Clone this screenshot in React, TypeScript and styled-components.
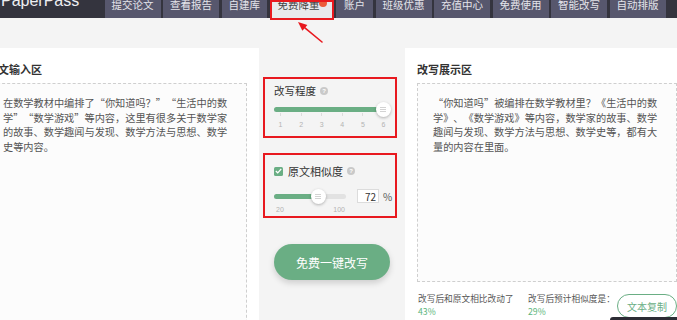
import styled, { createGlobalStyle } from "styled-components";

const GlobalStyle = createGlobalStyle`
  html, body {
    margin: 0;
    padding: 0;
  }
  body {
    width: 677px;
    height: 320px;
    overflow: hidden;
    background: #f4f4f4;
    font-family: "Noto Sans CJK SC", "Noto Sans", sans-serif;
    color: #555;
  }
`;

const GREEN = "#6aae84";
const RED = "#e8191f";

const Page = styled.div`
  position: relative;
  width: 677px;
  height: 320px;
  overflow: hidden;
`;

const NavBar = styled.nav`
  display: flex;
  height: 18px;
  gap: 2.5px;
  background: #34343e;
`;

const Logo = styled.div`
  flex: none;
  width: 102px;
  box-sizing: border-box;
  padding-left: 1px;
  margin-top: -7.5px;
  font-family: "Liberation Sans", Arial, sans-serif;
  font-size: 16px;
  line-height: 16px;
  color: #eeeef2;
`;

const Tab = styled.div<{ $px?: number }>`
  position: relative;
  flex: none;
  height: 18px;
  padding: 0 ${(p) => p.$px ?? 7}px;
  background: #57576d;
  color: #e4e4ea;
  font-size: 10.5px;
  line-height: 10px;
  white-space: nowrap;
`;

const ActiveTab = styled(Tab)`
  padding: 0 14px 0 8px;
  background: #e9e9ec;
  color: #444;

  &::after {
    content: "";
    position: absolute;
    left: 0;
    right: 0;
    top: 0;
    height: 20px;
    box-sizing: border-box;
    border: 2px solid ${RED};
  }
`;

const Dot = styled.span`
  position: absolute;
  left: 49px;
  top: -1px;
  width: 8px;
  height: 8px;
  border-radius: 50%;
  background: #ec5a3a;
`;

const Arrow = styled.svg`
  position: absolute;
  left: 290px;
  top: 16px;
`;

const Main = styled.main`
  display: flex;
  align-items: flex-start;
  margin: 30px 0 0 -25px;
`;

const Panel = styled.section`
  flex: none;
  width: 284px;
  height: 272px;
  box-sizing: border-box;
  padding: 14px 12px 0;
  background: #fff;
`;

const PanelTitle = styled.h3`
  margin: 0 0 7px;
  font-size: 11px;
  line-height: 14px;
  font-weight: bold;
  color: #333;
`;

const TextBox = styled.div<{ $h: number }>`
  height: ${(p) => p.$h}px;
  box-sizing: border-box;
  padding: 12px 15px;
  border: 1px dashed #cfcfcf;
  background: #fcfcfc;
  font-size: 10.2px;
  line-height: 14.5px;
  color: #555;
  text-spacing-trim: space-all;
`;

/* full-width quote marks, as the Chinese UI font draws them */
const Q = styled.span`
  font-feature-settings: "fwid";
`;

const Controls = styled.div`
  flex: none;
  width: 146px;
  box-sizing: border-box;
  padding: 29px 8px 0 4px;
  display: flex;
  flex-direction: column;
`;

const ControlBox = styled.div<{ $h: number; $pt: number; $mt?: number }>`
  width: 134px;
  height: ${(p) => p.$h}px;
  box-sizing: border-box;
  margin-top: ${(p) => p.$mt ?? 0}px;
  padding: ${(p) => p.$pt}px 9px 0;
  border: 2px solid ${RED};
`;

const LabelRow = styled.div<{ $size: number }>`
  display: flex;
  align-items: center;
  gap: 4px;
  height: 14px;
  font-size: ${(p) => p.$size}px;
  line-height: 14px;
  color: #333;
`;

const Help = styled.span`
  display: inline-flex;
  align-items: center;
  justify-content: center;
  width: 8px;
  height: 8px;
  border-radius: 50%;
  background: #c9c9c9;
  color: #fff;
  font-family: "Liberation Sans", Arial, sans-serif;
  font-size: 6px;
  font-weight: bold;
  line-height: 8px;
`;

const Check = styled.span`
  display: inline-flex;
  align-items: center;
  justify-content: center;
  width: 9px;
  height: 9px;
  border-radius: 1.5px;
  background: ${GREEN};
  margin-right: 1px;
`;

const Slider = styled.div<{ $w: number; $h: number; $mt?: number }>`
  position: relative;
  flex: none;
  width: ${(p) => p.$w}px;
  height: ${(p) => p.$h}px;
  margin-top: ${(p) => p.$mt ?? 0}px;
`;

const Rail = styled.div`
  position: absolute;
  left: 0;
  right: 0;
  top: 50%;
  height: 5px;
  margin-top: -2.5px;
  border-radius: 3px;
  background: #e2e2e2;
  overflow: hidden;
`;

const Fill = styled.div`
  height: 100%;
  background: ${GREEN};
`;

const Thumb = styled.div`
  position: absolute;
  top: 50%;
  width: 15px;
  height: 15px;
  margin: -7.5px 0 0 -7.5px;
  border-radius: 50%;
  background: #fff;
  box-shadow: 0 1px 3px rgba(0, 0, 0, 0.28);
  display: flex;
  align-items: center;
  justify-content: center;
`;

const Scale = styled.div<{ $w: number; $ml: number }>`
  display: flex;
  justify-content: space-between;
  width: ${(p) => p.$w}px;
  margin-left: ${(p) => p.$ml}px;
`;

const ScaleItem = styled.div`
  width: 5px;
  display: flex;
  flex-direction: column;
  align-items: center;
`;

const Mark = styled.span`
  width: 1px;
  height: 3px;
  background: #dcdcdc;
`;

const ScaleText = styled.span<{ $mt?: number }>`
  margin-top: ${(p) => p.$mt ?? 0}px;
  font-family: "Liberation Sans", Arial, sans-serif;
  font-size: 7px;
  line-height: 8px;
  color: #b3b3b3;
  white-space: nowrap;
`;

const SliderRow = styled.div`
  display: flex;
  align-items: center;
  height: 20px;
  margin-top: 8px;
`;

const ValueInput = styled.input`
  width: 22px;
  height: 14px;
  box-sizing: border-box;
  margin: 0 0 0 11px;
  padding: 0 2px 0 0;
  border: 1px solid #dcdcdc;
  background: #fff;
  text-align: right;
  font-family: "Noto Sans CJK SC", sans-serif;
  font-size: 10px;
  color: #333;
  outline: none;
`;

const Unit = styled.span`
  margin-left: 4px;
  font-size: 10px;
  color: #555;
`;

const RewriteButton = styled.button`
  width: 116px;
  height: 36px;
  margin: 26px 0 0 11px;
  border: none;
  border-radius: 18px;
  background: ${GREEN};
  box-shadow: 0 3px 6px rgba(0, 0, 0, 0.16);
  color: #fff;
  font-family: "Noto Sans CJK SC", sans-serif;
  font-size: 12px;
  cursor: pointer;
`;

const StatsRow = styled.div`
  display: flex;
  margin-top: 10px;
`;

const Stat = styled.div<{ $w: number }>`
  flex: none;
  width: ${(p) => p.$w}px;
  padding-left: 1px;
  box-sizing: border-box;
  font-size: 8.7px;
  line-height: 13px;
  color: #555;
  white-space: nowrap;
`;

const StatValue = styled.div`
  color: #5cb57c;
`;

const CopyButton = styled.button`
  flex: none;
  width: 60px;
  height: 24px;
  margin-top: 2px;
  padding: 0;
  border: 1px solid ${GREEN};
  border-radius: 12px;
  background: #fff;
  color: ${GREEN};
  font-family: "Noto Sans CJK SC", sans-serif;
  font-size: 10px;
`;

const CornerPopup = styled.div`
  position: absolute;
  left: 610px;
  top: 317px;
  width: 70px;
  height: 8px;
  border-radius: 3px 0 0 0;
  background: #2c2c34;
`;

const tabs = ["班级优惠", "充值中心", "免费使用", "智能改写", "自动排版"];

const Grip = () => (
  <svg width="6" height="5" viewBox="0 0 6 5">
    <path d="M0 0.5H6M0 2.5H6M0 4.5H6" stroke="#c8c8c8" strokeWidth="0.8" />
  </svg>
);

const RangeSlider = (props: { w: number; h: number; pos: number; mt?: number }) => (
  <Slider $w={props.w} $h={props.h} $mt={props.mt}>
    <Rail>
      <Fill style={{ width: `${props.pos}px` }} />
    </Rail>
    <Thumb style={{ left: `${props.pos}px` }}>
      <Grip />
    </Thumb>
  </Slider>
);

const App = () => {
  return (
    <Page>
      <GlobalStyle />
      <NavBar>
        <Logo>PaperPass</Logo>
        <Tab>提交论文</Tab>
        <Tab>查看报告</Tab>
        <Tab>自建库</Tab>
        <ActiveTab>
          免费降重
          <Dot />
        </ActiveTab>
        <Tab $px={8}>账户</Tab>
        {tabs.map((t) => (
          <Tab key={t}>{t}</Tab>
        ))}
      </NavBar>

      <Arrow width="40" height="32" viewBox="0 0 40 32">
        <path d="M32 26L14.9 11.8" stroke={RED} strokeWidth="1.6" strokeLinecap="round" />
        <polygon points="8,6 17.4,8.9 12.4,14.7" fill={RED} />
      </Arrow>

      <Main>
        <Panel>
          <PanelTitle>原文输入区</PanelTitle>
          <TextBox $h={260}>
            在数学教材中编排了<Q>“</Q>你知道吗？<Q>”“</Q>生活中的数学<Q>”“</Q>数学游戏<Q>”</Q>等内容，这里有很多关于数学家的故事、数学趣闻与发现、数学方法与思想、数学史等内容。
          </TextBox>
        </Panel>

        <Controls>
          <ControlBox $h={61} $pt={5}>
            <LabelRow $size={10.5}>
              改写程度
              <Help>?</Help>
            </LabelRow>
            <RangeSlider w={111} h={7} pos={109} mt={8} />
            <Scale $w={108} $ml={4}>
              {[1, 2, 3, 4, 5, 6].map((n) => (
                <ScaleItem key={n}>
                  <Mark />
                  <ScaleText $mt={5}>{n}</ScaleText>
                </ScaleItem>
              ))}
            </Scale>
          </ControlBox>

          <ControlBox $h={65} $pt={9} $mt={15}>
            <LabelRow $size={11}>
              <Check>
                <svg width="7" height="6" viewBox="0 0 7 6">
                  <path d="M0.8 3L2.7 4.8L6.2 1" fill="none" stroke="#fff" strokeWidth="1.2" />
                </svg>
              </Check>
              原文相似度
              <Help>?</Help>
            </LabelRow>
            <SliderRow>
              <RangeSlider w={72} h={20} pos={44} />
              <ValueInput readOnly defaultValue="72" />
              <Unit>%</Unit>
            </SliderRow>
            <Scale $w={69} $ml={2}>
              <ScaleText>20</ScaleText>
              <ScaleText>100</ScaleText>
            </Scale>
          </ControlBox>

          <RewriteButton>免费一键改写</RewriteButton>
        </Controls>

        <Panel>
          <PanelTitle>改写展示区</PanelTitle>
          <TextBox $h={199}>
            <Q>“</Q>你知道吗<Q>”</Q>被编排在数学教材里？《生活中的数学》、《数学游戏》等内容，数学家的故事、数学趣闻与发现、数学方法与思想、数学史等，都有大量的内容在里面。
          </TextBox>
          <StatsRow>
            <Stat $w={110}>
              改写后和原文相比改动了
              <StatValue>43%</StatValue>
            </Stat>
            <Stat $w={90}>
              改写后预计相似度是：
              <StatValue>29%</StatValue>
            </Stat>
            <CopyButton>文本复制</CopyButton>
          </StatsRow>
        </Panel>
      </Main>

      <CornerPopup />
    </Page>
  );
};

export default App;
